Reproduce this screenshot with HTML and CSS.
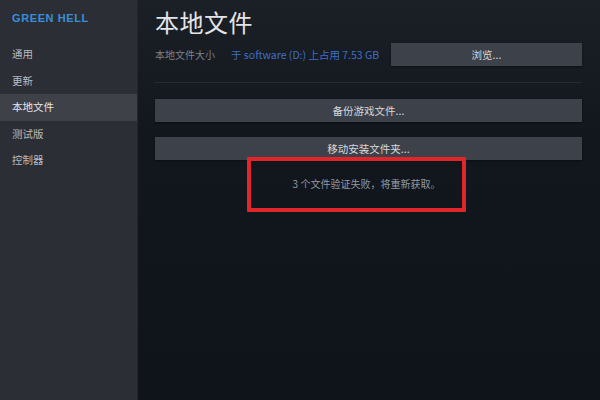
FILE: index.html
```html
<!DOCTYPE html>
<html lang="zh">
<head>
<meta charset="utf-8">
<link rel="stylesheet" href="styles.css">
</head>
<body>
<div class="app">
  <aside class="sidebar">
    <div class="game">GREEN HELL</div>
    <nav class="nav">
      <div class="item">通用</div>
      <div class="item">更新</div>
      <div class="item active">本地文件</div>
      <div class="item">测试版</div>
      <div class="item">控制器</div>
    </nav>
  </aside>
  <main class="main">
    <h1 class="title">本地文件</h1>
    <div class="size-row">
      <div class="size-info">
        <span class="label">本地文件大小</span>
        <span class="value">于 software (D:) 上占用 7.53 GB</span>
      </div>
      <div class="btn browse">浏览...</div>
    </div>
    <div class="sep"></div>
    <div class="btn wide">备份游戏文件...</div>
    <div class="btn wide">移动安装文件夹...</div>
    <div class="notice-wrap">
      <div class="notice">3 个文件验证失败，将重新获取。</div>
    </div>
  </main>
</div>
</body>
</html>
```
FILE: styles.css
```css
html, body {
  margin: 0;
  padding: 0;
  width: 600px;
  height: 400px;
  overflow: hidden;
  background: #0f131a;
  font-family: "Noto Sans CJK SC", "Liberation Sans", sans-serif;
}
.app {
  display: flex;
  width: 600px;
  height: 400px;
}
.sidebar {
  width: 137px;
  flex: none;
  background: #2b2e34;
  border-right: 1px solid #24272d;
  display: flex;
  flex-direction: column;
}
.game {
  padding: 10px 12px 0;
  height: 26px;
  line-height: 17px;
  font-family: "Liberation Sans", sans-serif;
  font-weight: bold;
  font-size: 11px;
  letter-spacing: 0.6px;
  color: #3a8ed8;
}
.nav {
  display: flex;
  flex-direction: column;
  margin-top: 5px;
}
.item {
  height: 26.5px;
  line-height: 26px;
  padding-left: 12px;
  font-size: 10.5px;
  color: #b7bbc1;
}
.item.active {
  background: #3e4148;
  color: #e4e6e9;
}
.main {
  flex: 1;
  padding: 0 18px 0 17px;
  background: linear-gradient(180deg, #1b1f26 0%, #12161d 35%, #0f131a 100%);
  display: flex;
  flex-direction: column;
}
.title {
  margin: 6px 0 0;
  height: 34px;
  line-height: 32px;
  font-size: 24px;
  font-weight: normal;
  color: #e2e4e7;
  letter-spacing: 0.5px;
}
.size-row {
  display: flex;
  align-items: center;
  justify-content: space-between;
  height: 23px;
  margin-top: 3px;
}
.size-info {
  display: flex;
  align-items: center;
  gap: 16px;
  font-size: 10px;
}
.label {
  color: #7d838c;
}
.value {
  color: #3f6fc8;
  font-size: 10.5px;
}
.btn {
  background: #3d4149;
  color: #d8dadd;
  font-size: 10.5px;
  display: flex;
  align-items: center;
  justify-content: center;
  box-sizing: border-box;
  box-shadow: 0 1px 2px rgba(0,0,0,0.4);
}
.browse {
  width: 191px;
  height: 23px;
}
.sep {
  height: 1px;
  background: #262a31;
  margin: 16px 0 16px;
}
.wide {
  height: 23px;
  margin-bottom: 15px;
}
.wide + .wide {
  margin-bottom: 0;
}
.notice-wrap {
  display: flex;
  padding-left: 92px;
  margin-top: -3px;
}
.notice {
  width: 219px;
  height: 55px;
  box-sizing: border-box;
  border: 4px solid #e0252b;
  border-radius: 1px;
  display: flex;
  align-items: center;
  justify-content: center;
  padding-left: 20px;
  padding-bottom: 3px;
  font-size: 10px;
  color: #9399a2;
}
```
